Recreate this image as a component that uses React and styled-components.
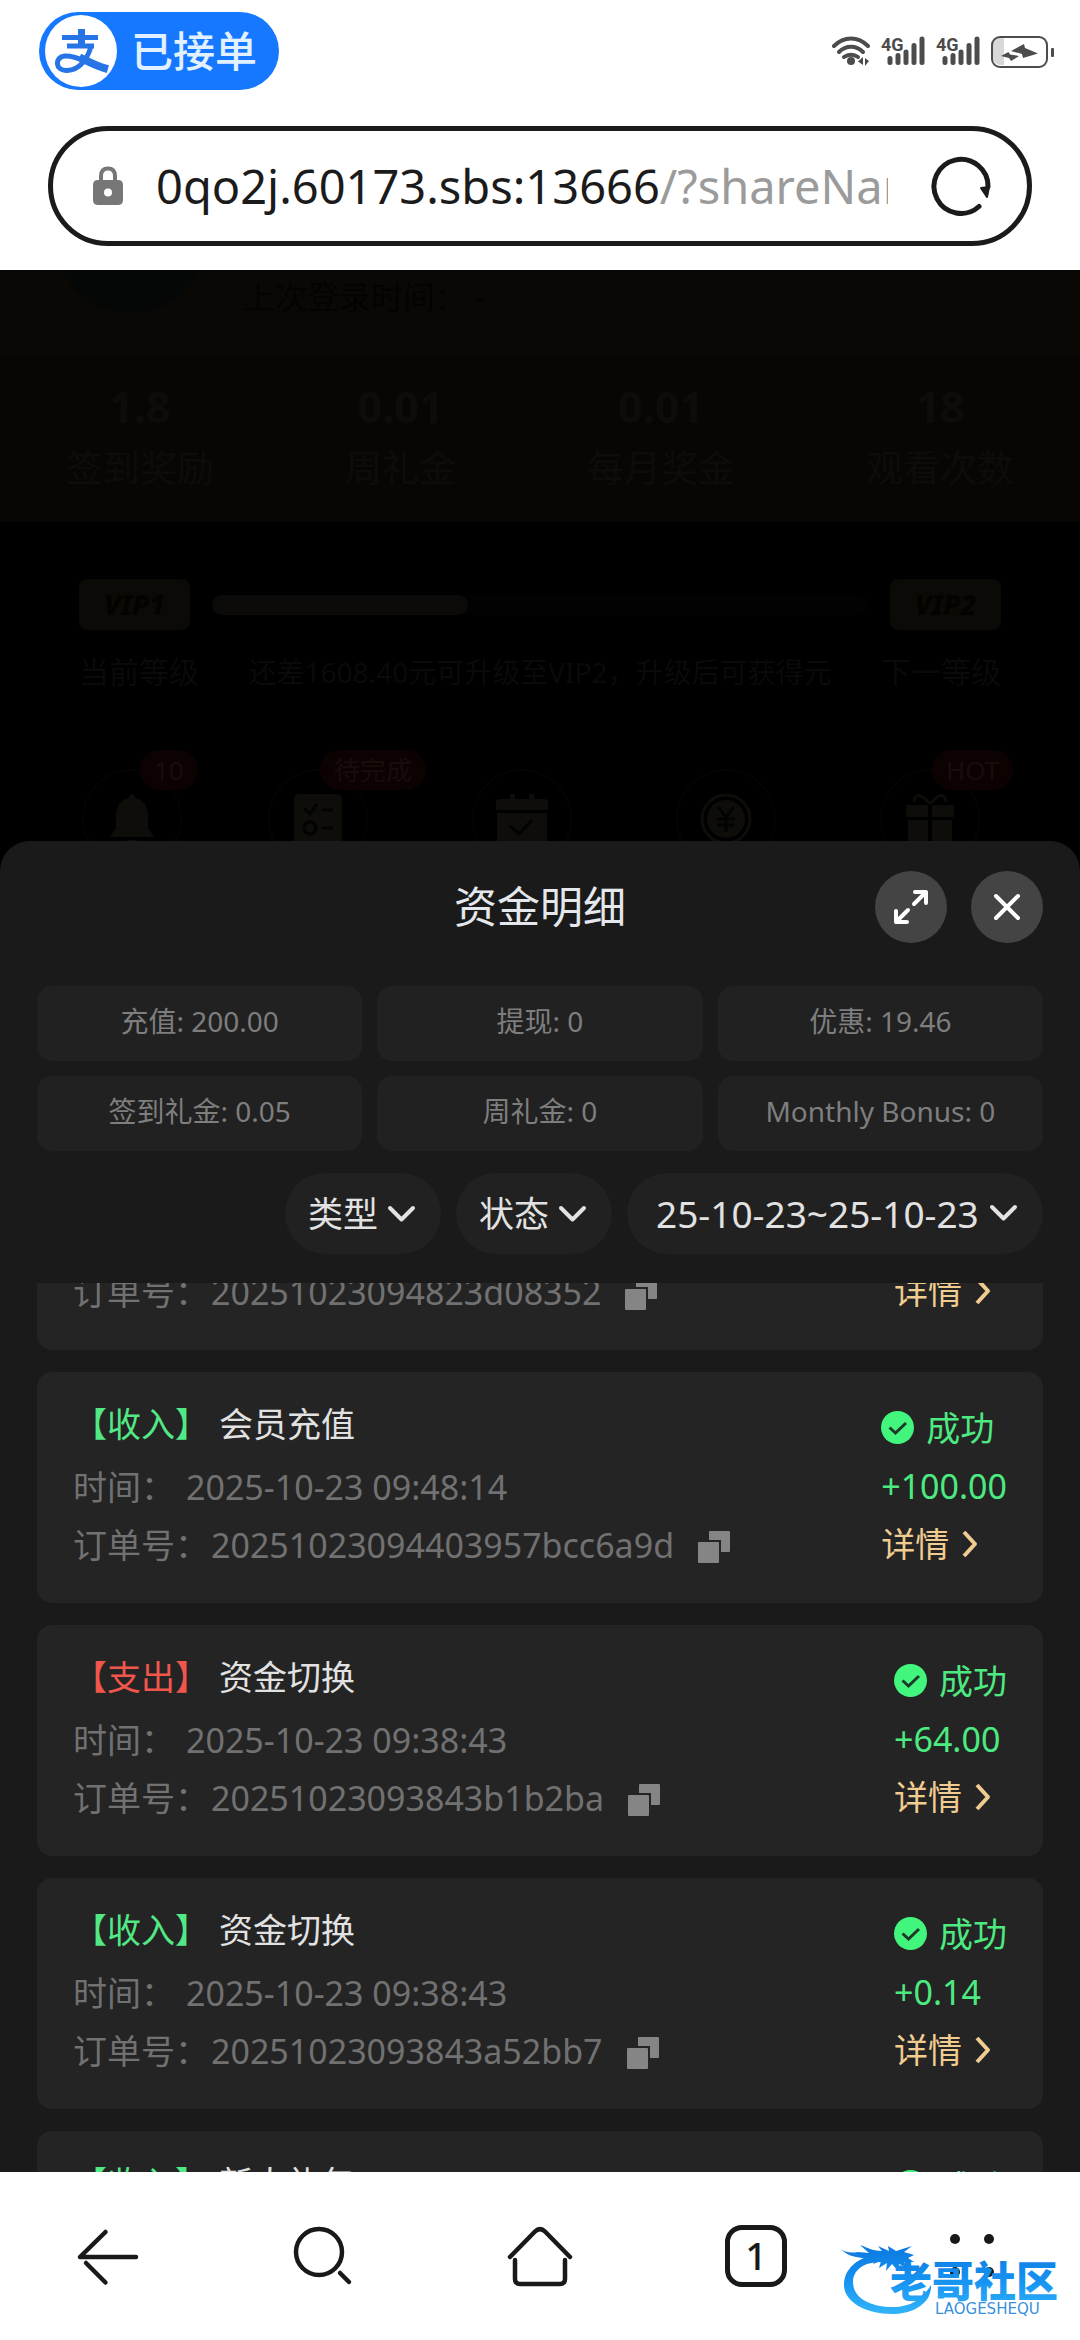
import React, { useLayoutEffect, useRef } from "react";
import styled, { createGlobalStyle } from "styled-components";

const GlobalStyle = createGlobalStyle`
  *, *::before, *::after { box-sizing: border-box; }
  html, body { margin: 0; background: #fff; }
  body, button, select { font-family: "Noto Sans", "Noto Sans CJK SC", sans-serif; }
  button { border: 0; padding: 0; background: none; color: inherit; cursor: pointer; }
  svg { display: block; flex: none; }
`;

const Screen = styled.div`
  height: 100vh;
  display: flex;
  flex-direction: column;
  overflow: hidden;
`;

/* ---------- status bar and address bar ---------- */

const StatusBar = styled.header`
  display: flex;
  align-items: center;
  justify-content: space-between;
  padding: 12px 26px 36px 39px;
`;

const OrderPill = styled.div`
  display: flex;
  align-items: center;
  gap: 14px;
  height: 78px;
  padding: 0 22px 0 6px;
  border-radius: 39px;
  background: #1677ff;
  color: #e2f1ff;
  font-size: 42px;
  font-weight: 500;
  line-height: 60px;
`;

const PayLogo = styled.div`
  width: 72px;
  height: 72px;
  border-radius: 50%;
  background: #fff;
`;

const StatusIcons = styled.div`
  display: flex;
  align-items: center;
  gap: 11px;
  color: #4c4c4c;
`;

const AddressBar = styled.div`
  display: flex;
  align-items: center;
  height: 120px;
  margin: 0 48px 24px;
  padding: 0 36px 0 40px;
  border: 5px solid #1b1b1b;
  border-radius: 60px;
  color: #1b1b1b;
`;

const Address = styled.button`
  flex: 1;
  min-width: 0;
  margin: 0 43px 0 33px;
  overflow: hidden;
  white-space: nowrap;
  text-align: left;
  font-size: 47px;
  line-height: 66px;
`;

const AddressPath = styled.span`
  color: #9b9b9b;
`;

/* ---------- page behind the sheet ---------- */

const Content = styled.main`
  position: relative;
  flex: 1;
  min-height: 0;
  overflow: hidden;
  background: #000;
`;

const Profile = styled.section`
  display: flex;
  align-items: flex-end;
  gap: 35px;
  height: 84px;
  padding: 0 54px 41px;
  overflow: hidden;
  background: #0a0804;
  color: #040302;
  font-size: 32px;
  line-height: 32px;
`;

const Avatar = styled.div`
  flex: none;
  width: 154px;
  height: 154px;
  border-radius: 50%;
  background: #050606;
`;

const Rewards = styled.section`
  display: flex;
  justify-content: space-between;
  padding: 29px 66px 32px;
  background: #070604;
`;

const Reward = styled.div`
  display: flex;
  flex-direction: column;
  align-items: center;
  gap: 15px;
  color: #0d0c0b;
  font-size: 37px;
  line-height: 44px;
`;

const RewardValue = styled.strong`
  font-size: 43px;
  line-height: 48px;
`;

const Level = styled.section`
  display: flex;
  flex-direction: column;
  gap: 22px;
  padding: 57px 79px 0;
  color: #0a0a0a;
`;

const LevelRow = styled.div`
  display: flex;
  align-items: center;
  justify-content: space-between;
  gap: 22px;
  font-size: 30px;
  line-height: 40px;
  white-space: nowrap;
`;

const LevelNote = styled.span`
  font-size: 28px;
`;

const VipBadge = styled.span`
  width: 111px;
  border-radius: 8px;
  background: #0b0a06;
  color: #040300;
  font-size: 28px;
  font-style: italic;
  font-weight: 800;
  line-height: 51px;
  text-align: center;
`;

const Track = styled.div`
  flex: 1;
  height: 20px;
  border-radius: 10px;
  background: #020202;
`;

const TrackFill = styled.div`
  width: ${(p) => p.$percent}%;
  height: 100%;
  border-radius: 10px;
  background: #0b0a08;
`;

const Shortcuts = styled.nav`
  display: grid;
  grid-template-columns: 186fr 204fr 204fr 204fr 100fr;
  padding: 77px 100px 0 82px;
`;

const Shortcut = styled.div`
  position: relative;
  display: flex;
  align-items: center;
  justify-content: center;
  width: 100px;
  height: 100px;
  border: 2px solid #040404;
  border-radius: 50%;
  color: #0e0d0a;
`;

const ShortcutBadge = styled.span`
  position: absolute;
  left: ${(p) => (p.$wide ? 50 : 56)}px;
  bottom: 77px;
  padding: 0 14px;
  border-radius: 20px;
  background: #0d0202;
  color: #180d0d;
  font-size: 26px;
  line-height: 40px;
  white-space: nowrap;
`;

/* ---------- sheet ---------- */

const Sheet = styled.section`
  position: absolute;
  left: 0;
  right: 0;
  bottom: 0;
  height: 70%;
  display: flex;
  flex-direction: column;
  border-radius: 30px 30px 0 0;
  background: #1a1a1a;
  overflow: hidden;
`;

const SheetHeader = styled.header`
  display: grid;
  grid-template-columns: 1fr auto 1fr;
  align-items: center;
  padding: 30px 37px 43px;
`;

const SheetTitle = styled.h1`
  grid-column: 2;
  margin: 0;
  color: #e4e7eb;
  font-size: 43px;
  font-weight: 400;
  line-height: 60px;
`;

const SheetActions = styled.div`
  display: flex;
  justify-content: flex-end;
  gap: 24px;
`;

const RoundButton = styled.button`
  display: flex;
  align-items: center;
  justify-content: center;
  width: 72px;
  height: 72px;
  border-radius: 50%;
  background: #444;
  color: #fff;
`;

const Summary = styled.div`
  display: grid;
  grid-template-columns: repeat(3, 1fr);
  gap: 15px;
  padding: 0 37px;
`;

const SummaryItem = styled.div`
  padding: 13px 0 17px;
  border-radius: 15px;
  background: #212121;
  color: #7e7e7e;
  font-size: 28px;
  line-height: 45px;
  text-align: center;
  white-space: nowrap;
`;

const Filters = styled.form`
  display: flex;
  justify-content: flex-end;
  gap: 15px;
  padding: 22px 37px 29px;
`;

const Filter = styled.label`
  position: relative;
  display: flex;
  color: #e2e2e2;
`;

const FilterSelect = styled.select`
  appearance: none;
  height: 81px;
  padding: 0 62px 0 23px;
  border: 0;
  border-radius: 41px;
  background: #212121;
  color: inherit;
  font-size: 35px;
`;

const FilterArrow = styled.span`
  position: absolute;
  right: 25px;
  top: 32px;
  pointer-events: none;
`;

const DateFilter = styled.button`
  display: flex;
  align-items: center;
  justify-content: space-between;
  min-width: 416px;
  height: 81px;
  padding: 0 25px 0 29px;
  border-radius: 41px;
  background: #212121;
  color: #e2e2e2;
  font-size: 37px;
`;

const Records = styled.ul`
  flex: 1;
  min-height: 0;
  display: flex;
  flex-direction: column;
  gap: 22px;
  margin: 0;
  padding: 0 37px;
  list-style: none;
  overflow-y: auto;
  scrollbar-width: none;
`;

const Card = styled.li`
  flex: none;
  display: flex;
  align-items: center;
  justify-content: space-between;
  padding: 23px 36px 29px;
  border-radius: 15px;
  background: #242424;
  color: #717171;
  font-size: 34px;
  line-height: 58px;
  white-space: nowrap;
`;

const CardTitle = styled.h2`
  display: flex;
  gap: 10px;
  margin: 0 0 5px;
  color: #e2e2e2;
  font-size: 34px;
  font-weight: 400;
  line-height: 58px;
`;

const Direction = styled.span`
  color: ${(p) => (p.$out ? "#f0564c" : "#52e886")};
`;

const Line = styled.div`
  display: flex;
  align-items: center;
  gap: ${(p) => p.$gap || 0}px;
`;

const CopyButton = styled.button`
  margin: 4px 0 0 22px;
  color: #858585;
`;

const Outcome = styled.div`
  display: flex;
  flex-direction: column;
  padding-top: 3px;
  color: #4dea82;
`;

const DetailLink = styled.a`
  display: flex;
  align-items: center;
  gap: 12px;
  color: #f0cc90;
  text-decoration: none;
`;

/* ---------- browser toolbar ---------- */

const Toolbar = styled.nav`
  position: relative;
  display: grid;
  grid-template-columns: repeat(5, 1fr);
  height: 168px;
  background: #fff;
  color: #181a1a;
`;

const ToolButton = styled.button`
  display: flex;
  align-items: center;
  justify-content: center;
`;

const TabCount = styled.span`
  width: 62px;
  height: 62px;
  border: 5px solid currentColor;
  border-radius: 17px;
  font-size: 38px;
  font-weight: 500;
  line-height: 50px;
`;

const Watermark = styled.div`
  position: absolute;
  right: 12px;
  bottom: 22px;
  pointer-events: none;
`;

const stroke = {
  fill: "none",
  stroke: "currentColor",
  strokeLinecap: "round",
  strokeLinejoin: "round",
};

const PayGlyph = () => (
  <svg width="72" height="72" viewBox="0 0 72 72" fill="none" stroke="#2674e6">
    <path d="M17 22.500H53" strokeWidth="5" />
    <path d="M36.500 14V31" strokeWidth="7" />
    <path d="M22 31H49" strokeWidth="5" />
    <path d="M46 31C43 43 35 55 22 55.500C10 56 9 42 20 41C32 40 42 49 60 53" strokeWidth="5" />
    <path d="M38 44C46 48 52 51 59 53" strokeWidth="8" strokeLinecap="square" />
  </svg>
);

const WifiIcon = () => (
  <svg width="38" height="32" viewBox="0 0 38 32" {...stroke} strokeWidth="4">
    <path d="M2 11C12 1 26 1 36 11" />
    <path d="M7 17C14 10 24 10 31 17" />
    <path d="M12 22C16 19 22 19 26 22" />
    <circle cx="19" cy="26" r="4" fill="currentColor" stroke="none" />
    <path d="M31 22V30L26 26.500ZM33 23V31L37 26Z" fill="currentColor" stroke="none" />
  </svg>
);

const SignalIcon = () => (
  <svg width="44" height="32" viewBox="0 0 44 32" {...stroke} strokeWidth="5">
    <text x="0" y="16" fill="currentColor" stroke="none" fontFamily="Roboto, sans-serif" fontSize="18" fontWeight="700">4G</text>
    <path d="M9 23.500V27.500M17 20.500V27.500M25 17V27.500M33 10.500V27.500M41 4V27.500" />
  </svg>
);

const BatteryIcon = () => (
  <svg width="63" height="34" viewBox="0 0 63 34">
    <path d="M10 3H13V31H10Q2 31 2 23V11Q2 3 10 3Z" fill="#d8d8d8" />
    <rect x="1" y="3" width="55" height="30" rx="8" fill="none" stroke="currentColor" strokeWidth="2" />
    <rect x="60" y="14" width="3" height="9" rx="1" fill="currentColor" />
    <path d="M20 17L33 10L34 14L47 19.500L32 24L31 20ZM10 22L17.500 18L19 20.500L28 22L20 27L18 24Z" fill="currentColor" />
  </svg>
);

const LockIcon = () => (
  <svg width="30" height="40" viewBox="0 0 30 40">
    <path d="M8 16V10Q8 2.500 15 2.500Q22 2.500 22 10V16" fill="none" stroke="#777" strokeWidth="4" />
    <path fillRule="evenodd" fill="#777" d="M5 14H25Q30 14 30 19V34Q30 39 25 39H5Q0 39 0 34V19Q0 14 5 14ZM15 22.500A4 4 0 1 0 15 30.500A4 4 0 1 0 15 22.500Z" />
  </svg>
);

const ReloadIcon = () => (
  <svg width="60" height="60" viewBox="0 0 60 60" {...stroke} strokeWidth="5">
    <path d="M48 50.500A27 27 0 1 1 57 31" />
    <path d="M50 32L58 31L56 41Z" fill="currentColor" strokeWidth="2" />
  </svg>
);

const ExpandIcon = () => (
  <svg width="36" height="36" viewBox="0 0 36 36" {...stroke} strokeWidth="4">
    <path d="M21 15L33 3M22 3H33V14M15 21L3 33M3 22V33H14" />
  </svg>
);

const CloseIcon = () => (
  <svg width="28" height="28" viewBox="0 0 28 28" {...stroke} strokeWidth="4">
    <path d="M3 3L25 25M25 3L3 25" />
  </svg>
);

const DownIcon = () => (
  <svg width="29" height="18" viewBox="0 0 29 18" {...stroke} strokeWidth="4">
    <path d="M3 3L14.500 14.500L26 3" />
  </svg>
);

const RightIcon = () => (
  <svg width="17" height="28" viewBox="0 0 17 28" {...stroke} strokeWidth="4" strokeLinecap="butt">
    <path d="M3 2L14 14L3 26" />
  </svg>
);

const CopyIcon = () => (
  <svg width="32" height="32" viewBox="0 0 32 32" fill="currentColor">
    <rect y="11" width="21" height="21" rx="1" />
    <path d="M12 0H31Q32 0 32 1V20Q32 21 31 21H23V9H11V1Q11 0 12 0Z" />
  </svg>
);

const SuccessIcon = () => (
  <svg width="33" height="33" viewBox="0 0 33 33">
    <circle cx="16.500" cy="16.500" r="16.500" fill="#42f57c" />
    <path d="M8.500 16.500L14.500 22L25 12" fill="none" stroke="#1d3a28" strokeWidth="3" />
  </svg>
);

const BellIcon = () => (
  <svg width="46" height="52" viewBox="0 0 46 52" fill="currentColor">
    <path d="M20 5Q20 1 23 1Q26 1 26 5Q39 8 39 23V35L45 44H1L7 35V23Q7 8 20 5ZM18 47H28Q27 51 23 51Q19 51 18 47Z" />
  </svg>
);

const TaskIcon = () => (
  <svg width="48" height="50" viewBox="0 0 48 50">
    <rect width="48" height="50" rx="5" fill="currentColor" />
    <path d="M10 14L16 20L23 10M28 16H39M28 34H39" fill="none" stroke="#030303" strokeWidth="3" />
    <circle cx="16" cy="34" r="6" fill="none" stroke="#030303" strokeWidth="3" />
  </svg>
);

const CalendarIcon = () => (
  <svg width="52" height="50" viewBox="0 0 52 50">
    <path d="M14 0H19V5H33V0H38V5H48Q52 5 52 9V16H0V9Q0 5 4 5H14ZM1 19H51V50H1Z" fill="currentColor" />
    <path d="M14 32L23 40L36 26" fill="none" stroke="#030303" strokeWidth="3" />
  </svg>
);

const CoinIcon = () => (
  <svg width="52" height="52" viewBox="0 0 52 52" fill="none" stroke="currentColor" strokeWidth="3">
    <circle cx="26" cy="26" r="24" />
    <circle cx="26" cy="26" r="19" fill="currentColor" stroke="none" />
    <path d="M18 14L26 24L34 14M26 24V39M17 26H35M17 32H35" stroke="#030303" />
  </svg>
);

const GiftIcon = () => (
  <svg width="48" height="52" viewBox="0 0 48 52" fill="currentColor">
    <path d="M24 11Q10 -5 8 9M24 11Q38 -5 40 9" fill="none" stroke="currentColor" strokeWidth="3" />
    <path d="M0 12H22V24H0ZM26 12H48V24H26ZM2 27H22V52H2ZM26 27H46V52H26Z" />
  </svg>
);

const BackIcon = () => (
  <svg width="72" height="72" viewBox="0 0 72 72" {...stroke} strokeWidth="4.500">
    <path d="M64 37H8L33.500 12" />
    <path d="M14 43L33.500 62.500" />
  </svg>
);

const SearchIcon = () => (
  <svg width="72" height="72" viewBox="0 0 72 72" {...stroke} strokeWidth="4.500">
    <circle cx="31" cy="32" r="23" />
    <path d="M52 53L61 62" />
  </svg>
);

const HomeIcon = () => (
  <svg width="72" height="72" viewBox="0 0 72 72" {...stroke} strokeWidth="4.500">
    <path d="M6 37L31 11.500Q36 6.500 41 11.500L66 37" />
    <path d="M11 40V59Q11 64 16 64H56Q61 64 61 59V40" />
  </svg>
);

const MenuIcon = () => (
  <svg width="72" height="72" viewBox="0 0 72 72" fill="currentColor">
    <circle cx="19" cy="19" r="5" />
    <circle cx="53" cy="19" r="5" />
    <circle cx="19" cy="52" r="5" />
    <circle cx="53" cy="52" r="5" />
  </svg>
);

const DragonLogo = () => (
  <svg width="230" height="78" viewBox="0 0 230 78" role="img" aria-label="老哥社区">
    <defs>
      <linearGradient id="logoBlue" x1="0" y1="0" x2="0" y2="78" gradientUnits="userSpaceOnUse">
        <stop offset="0" stopColor="#0c74dc" />
        <stop offset="0.5" stopColor="#1591f0" />
        <stop offset="1" stopColor="#35b8fb" />
      </linearGradient>
    </defs>
    <g fill="url(#logoBlue)">
      <path d="M44 14C18 16 6 30 6 45C6 62 28 74 54 74C78 74 94 61 93 45C84 59 74 67 54 67C34 67 15 59 15 42C15 30 26 21 46 22Z" />
      <path d="M3 9C8 13 14 13 20 12L31 13L22 5C30 8 36 11 44 11L40 6L51 11L50 6L58 11L74 6L66 12L76 15L70 18L76 22L66 22L70 28L61 24L60 31L54 24L48 31L49 23L41 28L43 21L35 24L38 18L24 18C16 17 8 15 3 9Z" />
      <text x="52" y="57" fontFamily="'Noto Sans CJK SC', sans-serif" fontSize="42" fontWeight="900">老哥社区</text>
    </g>
    <text x="97" y="74" fill="#3791dc" fontFamily="'DejaVu Sans', sans-serif" fontSize="15">LAOGESHEQU</text>
  </svg>
);

const rewards = [
  ["1.8", "签到奖励"],
  ["0.01", "周礼金"],
  ["0.01", "每月奖金"],
  ["18", "观看次数"],
];

const shortcuts = [
  { icon: BellIcon, badge: "10" },
  { icon: TaskIcon, badge: "待完成", wide: true },
  { icon: CalendarIcon },
  { icon: CoinIcon },
  { icon: GiftIcon, badge: "HOT", wide: true },
];

const summary = [
  "充值: 200.00",
  "提现: 0",
  "优惠: 19.46",
  "签到礼金: 0.05",
  "周礼金: 0",
  "Monthly Bonus: 0",
];

const records = [
  { title: "会员充值", time: "2025-10-23 09:48:23", order: "20251023094823d08352", amount: "+50.00" },
  { title: "会员充值", time: "2025-10-23 09:48:14", order: "20251023094403957bcc6a9d", amount: "+100.00" },
  { out: true, title: "资金切换", time: "2025-10-23 09:38:43", order: "20251023093843b1b2ba", amount: "+64.00" },
  { title: "资金切换", time: "2025-10-23 09:38:43", order: "20251023093843a52bb7", amount: "+0.14" },
  { title: "新人礼包", time: "2025-10-23 09:37:20", order: "20251023093720c81f06", amount: "+18.00" },
];

function FilterMenu({ name, options }) {
  return (
    <Filter>
      <FilterSelect aria-label={name} defaultValue={name}>
        {[name, ...options].map((o) => (
          <option key={o}>{o}</option>
        ))}
      </FilterSelect>
      <FilterArrow>
        <DownIcon />
      </FilterArrow>
    </Filter>
  );
}

function Record({ out, title, time, order, amount }) {
  return (
    <Card>
      <div>
        <CardTitle>
          <Direction $out={out}>{out ? "【支出】" : "【收入】"}</Direction>
          {title}
        </CardTitle>
        <Line $gap={11}>
          <span>时间：</span>
          <span>{time}</span>
        </Line>
        <Line $gap={2}>
          <span>订单号：</span>
          <span>{order}</span>
          <CopyButton type="button" aria-label="复制">
            <CopyIcon />
          </CopyButton>
        </Line>
      </div>
      <Outcome>
        <Line $gap={12}>
          <SuccessIcon />
          成功
        </Line>
        <span>{amount}</span>
        <DetailLink href="#detail">
          详情
          <RightIcon />
        </DetailLink>
      </Outcome>
    </Card>
  );
}

export default function App() {
  const list = useRef(null);

  useLayoutEffect(() => {
    list.current.scrollTop = 164;
  }, []);

  return (
    <Screen>
      <GlobalStyle />
      <StatusBar>
        <OrderPill>
          <PayLogo>
            <PayGlyph />
          </PayLogo>
          已接单
        </OrderPill>
        <StatusIcons>
          <WifiIcon />
          <SignalIcon />
          <SignalIcon />
          <BatteryIcon />
        </StatusIcons>
      </StatusBar>
      <AddressBar>
        <LockIcon />
        <Address type="button">
          0qo2j.60173.sbs:13666<AddressPath>/?shareName=</AddressPath>
        </Address>
        <button type="button" aria-label="刷新">
          <ReloadIcon />
        </button>
      </AddressBar>

      <Content>
        <Profile>
          <Avatar />
          <span>上次登录时间： -</span>
        </Profile>
        <Rewards>
          {rewards.map(([value, label]) => (
            <Reward key={label}>
              <RewardValue>{value}</RewardValue>
              {label}
            </Reward>
          ))}
        </Rewards>
        <Level>
          <LevelRow>
            <VipBadge>VIP1</VipBadge>
            <Track>
              <TrackFill $percent={39} />
            </Track>
            <VipBadge>VIP2</VipBadge>
          </LevelRow>
          <LevelRow>
            <span>当前等级</span>
            <LevelNote>还差1608.40元可升级至VIP2，升级后可获得元</LevelNote>
            <span>下一等级</span>
          </LevelRow>
        </Level>
        <Shortcuts>
          {shortcuts.map(({ icon: Icon, badge, wide }, i) => (
            <Shortcut key={i}>
              <Icon />
              {badge && <ShortcutBadge $wide={wide}>{badge}</ShortcutBadge>}
            </Shortcut>
          ))}
        </Shortcuts>

        <Sheet>
          <SheetHeader>
            <SheetTitle>资金明细</SheetTitle>
            <SheetActions>
              <RoundButton type="button" aria-label="展开">
                <ExpandIcon />
              </RoundButton>
              <RoundButton type="button" aria-label="关闭">
                <CloseIcon />
              </RoundButton>
            </SheetActions>
          </SheetHeader>
          <Summary>
            {summary.map((text) => (
              <SummaryItem key={text}>{text}</SummaryItem>
            ))}
          </Summary>
          <Filters>
            <FilterMenu name="类型" options={["收入", "支出"]} />
            <FilterMenu name="状态" options={["成功", "失败"]} />
            <DateFilter type="button">
              25-10-23~25-10-23
              <DownIcon />
            </DateFilter>
          </Filters>
          <Records ref={list}>
            {records.map((r) => (
              <Record key={r.order} {...r} />
            ))}
          </Records>
        </Sheet>
      </Content>

      <Toolbar>
        <ToolButton type="button" aria-label="返回">
          <BackIcon />
        </ToolButton>
        <ToolButton type="button" aria-label="搜索">
          <SearchIcon />
        </ToolButton>
        <ToolButton type="button" aria-label="主页">
          <HomeIcon />
        </ToolButton>
        <ToolButton type="button" aria-label="标签页">
          <TabCount>1</TabCount>
        </ToolButton>
        <ToolButton type="button" aria-label="菜单">
          <MenuIcon />
        </ToolButton>
        <Watermark>
          <DragonLogo />
        </Watermark>
      </Toolbar>
    </Screen>
  );
}
